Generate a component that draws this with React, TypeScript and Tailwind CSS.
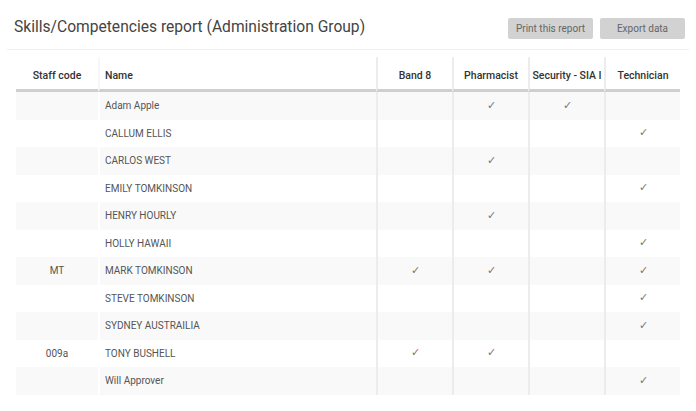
const skills = ["Band 8", "Pharmacist", "Security - SIA I", "Technician"]

type Row = { code: string; name: string; has: boolean[] }

const rows: Row[] = [
  { code: "", name: "Adam Apple", has: [false, true, true, false] },
  { code: "", name: "CALLUM ELLIS", has: [false, false, false, true] },
  { code: "", name: "CARLOS WEST", has: [false, true, false, false] },
  { code: "", name: "EMILY TOMKINSON", has: [false, false, false, true] },
  { code: "", name: "HENRY HOURLY", has: [false, true, false, false] },
  { code: "", name: "HOLLY HAWAII", has: [false, false, false, true] },
  { code: "MT", name: "MARK TOMKINSON", has: [true, true, false, true] },
  { code: "", name: "STEVE TOMKINSON", has: [false, false, false, true] },
  { code: "", name: "SYDNEY AUSTRAILIA", has: [false, false, false, true] },
  { code: "009a", name: "TONY BUSHELL", has: [true, true, false, false] },
  { code: "", name: "Will Approver", has: [false, false, false, true] },
]

export default function App() {
  return (
    <div className="w-[696px] h-[411px] bg-white overflow-hidden font-['Roboto','Liberation_Sans',sans-serif]">
      <div className="mx-[7px]">
        {/* Header */}
        <div className="flex items-center justify-between h-[50px] pt-[7px] pl-[7px] pr-[4px] border-b border-[#f0f0f0]">
          <h1 className="text-[15.6px] text-[#444] font-normal">
            Skills/Competencies report (Administration Group)
          </h1>
          <div className="flex gap-[7px]">
            <button className="w-[85px] h-[21px] bg-[#d2d2d2] text-[#666] text-[10px] rounded-[2px]">
              Print this report
            </button>
            <button className="w-[85px] h-[21px] bg-[#d2d2d2] text-[#666] text-[10px] rounded-[2px]">
              Export data
            </button>
          </div>
        </div>

        {/* Table */}
        <table className="ml-[9px] mt-[7px] border-separate border-spacing-0 table-fixed w-[664px]">
          <colgroup>
            <col className="w-[82px]" />
            <col className="w-[278px]" />
            <col className="w-[76px]" />
            <col className="w-[76px]" />
            <col className="w-[76px]" />
            <col className="w-[76px]" />
          </colgroup>
          <thead>
            <tr>
              <th className="h-[35px] pt-[6px] text-center text-[10.5px] font-[500] text-[#333] border-b-[3px] border-b-[#cfcfcf]">
                Staff code
              </th>
              <th className="h-[35px] pt-[6px] text-left pl-[5px] text-[10.5px] font-[500] text-[#333] border-l-2 border-l-[#f7f7f7] border-b-[3px] border-b-[#cfcfcf]">
                Name
              </th>
              {skills.map((s) => (
                <th
                  key={s}
                  className="h-[35px] pt-[6px] text-center text-[10.5px] font-[500] text-[#333] whitespace-nowrap overflow-hidden border-l-2 border-l-[#ececec] border-b-[3px] border-b-[#cfcfcf]"
                >
                  {s}
                </th>
              ))}
            </tr>
          </thead>
          <tbody>
            {rows.map((r, i) => (
              <tr key={r.name} className={i % 2 === 0 ? "bg-[#f9f9f9]" : "bg-white"}>
                <td className="h-[27.5px] text-center text-[10px] text-[#555]">{r.code}</td>
                <td className="h-[27.5px] pl-[5px] text-[10px] text-[#555] border-l-2 border-l-white">{r.name}</td>
                {r.has.map((h, j) => (
                  <td key={j} className="h-[27.5px] text-center text-[11px] text-[#777] border-l-2 border-l-[#ececec]">
                    {h ? "✓" : ""}
                  </td>
                ))}
              </tr>
            ))}
          </tbody>
        </table>
      </div>
    </div>
  )
}
